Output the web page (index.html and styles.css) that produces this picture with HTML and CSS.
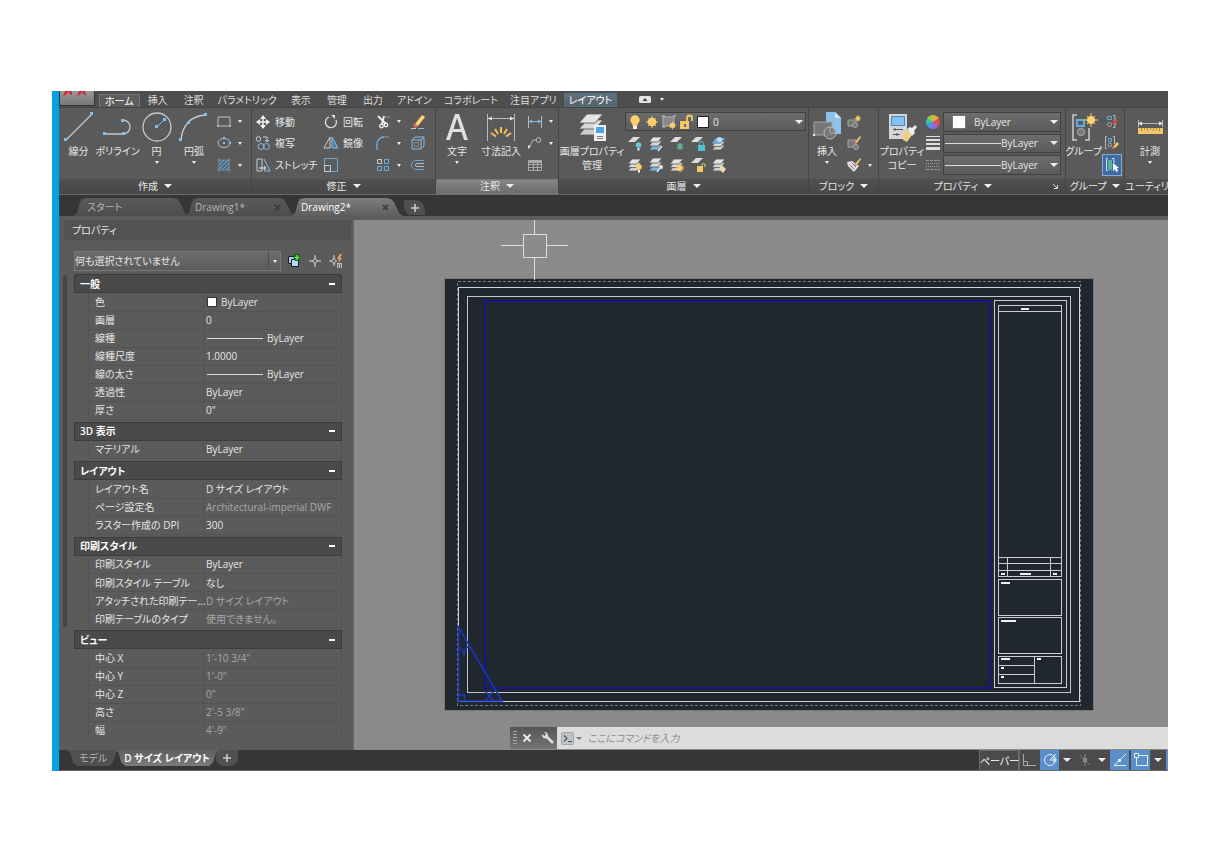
FILE: index.html
```html
<!DOCTYPE html>
<html lang="ja">
<head>
<meta charset="utf-8">
<title>Drawing2</title>
<link rel="stylesheet" href="styles.css">
</head>
<body>
<svg class="defs" aria-hidden="true">
  <defs>
    <symbol id="sheets" viewBox="0 0 16 16">
      <g stroke="#595959" stroke-width="0.800"><path d="M5 9h9l-4 5H1z" fill="#cfcfcf"/><path d="M5 5.500h9l-4 5H1z" fill="#d8d8d8"/><path d="M5 2h9l-4 5H1z" fill="#e4e4e4"/></g>
    </symbol>
    <symbol id="sheets-blue" viewBox="0 0 16 16">
      <g stroke="#595959" stroke-width="0.800"><path d="M5 9h9l-4 5H1z" fill="#7ab5e0"/><path d="M5 5h9l-4 5H1z" fill="#d8d8d8"/><path d="M5 1h9l-4 5H1z" fill="#e4e4e4"/></g>
    </symbol>
    <symbol id="sheet" viewBox="0 0 16 16"><path d="M6 1h7L8 6H1z" fill="#dcdcdc"/></symbol>
    <symbol id="lamp" viewBox="0 0 16 16"><circle cx="8" cy="6" r="4.700" fill="#ffcf68"/><path d="M5.500 10h5v2h-5z" fill="#ffcf68"/><path d="M6 12h4v3H6z" fill="#fff"/></symbol>
    <symbol id="sun" viewBox="0 0 16 16"><circle cx="8" cy="8" r="4.300" fill="#ffcf68"/><path d="M8 2v12M2 8h12M4 4l8 8M12 4l-8 8" stroke="#ffcf68"/></symbol>
    <symbol id="unlock" viewBox="0 0 16 16"><path d="M2 7h9v8H2z" fill="#f3c766"/><path d="M9 8V4a2.500 2.500 0 0 1 5 0v3" fill="none" stroke="#f3c766" stroke-width="1.800"/><path d="M6 10h2v3H6z" fill="#766"/></symbol>
  </defs>
</svg>
<div class="app">
  <nav class="menu" aria-label="リボン タブ">
    <button class="appmenu" aria-label="アプリケーション メニュー"><svg width="34" height="15" viewBox="0 0 34 15"><path d="M3 5l2-5h4l-3 4zM9 0h3v4l-3-1zM17 5l2-5h3l-1 3zM22 0h3l1 5-3-2z" fill="#cf2f32"/></svg></button>
    <button class="mtab on">ホーム</button>
    <button class="mtab">挿入</button>
    <button class="mtab">注釈</button>
    <button class="mtab kana">パラメトリック</button>
    <button class="mtab">表示</button>
    <button class="mtab">管理</button>
    <button class="mtab">出力</button>
    <button class="mtab kana">アドイン</button>
    <button class="mtab kana">コラボレート</button>
    <button class="mtab kana">注目アプリ</button>
    <button class="mtab ctx">レイアウト</button>
    <button class="mtoggle" aria-label="リボンを最小化"><svg width="12" height="7" viewBox="0 0 12 7"><rect width="12" height="7" rx="1.500" fill="#e4e4e4"/><path d="M3.500 5L6 2l2.500 3z" fill="#444"/></svg><i class="caret s"></i></button>
  </nav>

  <div class="ribbon">
    <section class="panel p-draw">
      <div class="pbody">
        <button class="big"><svg width="32" height="32" viewBox="0 0 32 32"><path d="M3 29L29 3" stroke="#c8c8c8" stroke-width="1.300"/><g fill="#83bdea"><rect x="1" y="27" width="3" height="3"/><rect x="27" y="1" width="3" height="3"/></g></svg>線分</button>
        <button class="big"><svg width="32" height="32" viewBox="0 0 32 32"><path d="M3 23h18a7 7 0 0 0 0-14" fill="none" stroke="#c8c8c8" stroke-width="1.300"/><g fill="#83bdea"><rect x="1" y="21" width="3" height="3"/><rect x="20" y="21" width="3" height="3"/><rect x="19" y="8" width="3" height="3"/></g></svg>ポリライン</button>
        <button class="big"><svg width="32" height="32" viewBox="0 0 32 32"><circle cx="16" cy="16" r="14" fill="none" stroke="#c8c8c8" stroke-width="1.300"/><path d="M16 16l7-7" stroke="#83bdea"/><g fill="#83bdea"><rect x="14" y="14" width="3" height="3"/><rect x="22" y="7" width="3" height="3"/></g></svg>円<i class="caret s"></i></button>
        <button class="big"><svg width="32" height="32" viewBox="0 0 32 32"><path d="M3 28Q6 6 27 4" fill="none" stroke="#c8c8c8" stroke-width="1.300"/><g fill="#83bdea"><rect x="1" y="27" width="3" height="3"/><rect x="9" y="10" width="3" height="3"/><rect x="26" y="2" width="3" height="3"/></g></svg>円弧<i class="caret s"></i></button>
        <div class="stack">
          <button class="sm" aria-label="長方形"><svg viewBox="0 0 16 16"><path d="M2 3h12v9H2z" fill="none" stroke="#bcbcbc"/><path d="M1 11h2v2H1zM13 11h2v2h-2z" fill="#83bdea"/></svg><i class="caret s"></i></button>
          <button class="sm" aria-label="楕円"><svg viewBox="0 0 16 16"><ellipse cx="8" cy="8" rx="6" ry="4.500" fill="none" stroke="#bcbcbc"/><path d="M7 7h2v2H7zM13 7h2v2h-2zM7 2h2v2H7z" fill="#83bdea"/></svg><i class="caret s"></i></button>
          <button class="sm" aria-label="ハッチング"><svg viewBox="0 0 16 16"><path d="M3 3h10v10H3z" fill="#4a6d8c"/><path d="M3 8l5-5M3 12l9-9M6 13l7-7M10 13l3-3" stroke="#83bdea" stroke-width="0.700"/><path d="M3 1v14M13 1v14M1 3h14M1 13h14" stroke="#999" stroke-width="0.700"/></svg><i class="caret s"></i></button>
        </div>
      </div>
      <button class="ptitle">作成<i class="caret"></i></button>
    </section>

    <section class="panel p-modify">
      <div class="pbody grid-mod">
        <button class="sm"><svg viewBox="0 0 16 16"><path d="M8 2v12M2 8h12" stroke="#f0f0f0" stroke-width="1.500"/><path d="M8 1l3 4H5zM8 15l3-4H5zM1 8l4-3v6zM15 8l-4-3v6z" fill="#f0f0f0"/></svg>移動</button>
        <button class="sm"><svg viewBox="0 0 16 16"><path d="M6 3a5.500 5.500 0 1 0 7 3" fill="none" stroke="#ddd" stroke-width="1.300"/><path d="M8 1h4v4z" fill="#ddd"/></svg>回転</button>
        <button class="sm" aria-label="トリム"><svg viewBox="0 0 16 16"><path d="M9 3h6" stroke="#999"/><path d="M3 2l8 8M9 2l-2 8" stroke="#f2f2f2" stroke-width="1.800"/><circle cx="6.500" cy="12" r="1.800" fill="none" stroke="#f2f2f2" stroke-width="1.300"/><circle cx="11" cy="11" r="1.800" fill="none" stroke="#f2f2f2" stroke-width="1.300"/></svg><i class="caret s"></i></button>
        <button class="sm" aria-label="削除"><svg viewBox="0 0 16 16"><path d="M12 1l3 2-7 9-3-2z" fill="#ffd27a"/><path d="M5 9l3 3-2 2-3-2z" fill="#eb6a62"/><path d="M1 14.500h5" stroke="#ccc"/><path d="M8 14.500h6" stroke="#83bdea"/></svg></button>
        <button class="sm"><svg viewBox="0 0 16 16"><circle cx="3.500" cy="4" r="2.300" fill="none" stroke="#ccc"/><path d="M8 2h4v4M10 5l2 2 2-2" fill="none" stroke="#ccc"/><circle cx="6" cy="11.500" r="3" fill="none" stroke="#83bdea"/><circle cx="11.500" cy="11.500" r="3" fill="none" stroke="#83bdea"/></svg>複写</button>
        <button class="sm"><svg viewBox="0 0 16 16"><path d="M7 2v11H1z" fill="none" stroke="#ccc"/><path d="M9 2v11h6z" fill="#4d7da3" stroke="#83bdea"/></svg>鏡像</button>
        <button class="sm" aria-label="フィレット"><svg viewBox="0 0 16 16"><path d="M2 15V9a7 7 0 0 1 7-7" fill="none" stroke="#72aee0" stroke-width="1.300"/><path d="M9 2h5" stroke="#999"/></svg><i class="caret s"></i></button>
        <button class="sm" aria-label="分解"><svg viewBox="0 0 16 16"><path d="M2 5h9v9H2zM2 5l3-3h9v9l-3 3M11 5l3-3" fill="none" stroke="#83bdea"/><path d="M4.500 7.500h4v4h-4z" fill="none" stroke="#888"/></svg></button>
        <button class="sm"><svg viewBox="0 0 16 16"><path d="M7 2H2v12h5z" fill="none" stroke="#ccc"/><path d="M9 2l6 12H9" fill="none" stroke="#83bdea"/><path d="M4 11h7M9 9l2 2-2 2" fill="none" stroke="#eee"/></svg>ストレッチ</button>
        <button class="sm" aria-label="尺度変更"><svg viewBox="0 0 16 16"><path d="M1.500 1.500h13v13h-13z" fill="none" stroke="#72a8d5"/><path d="M1.500 8.500h6v6h-6z" fill="none" stroke="#ccc"/></svg></button>
        <button class="sm" aria-label="配列複写"><svg viewBox="0 0 16 16"><path d="M2.500 2.500h4v4h-4z" fill="none" stroke="#ccc"/><path d="M9.500 2.500h4v4h-4zM2.500 9.500h4v4h-4zM9.500 9.500h4v4h-4z" fill="none" stroke="#72a8d5"/></svg><i class="caret s"></i></button>
        <button class="sm" aria-label="オフセット"><svg viewBox="0 0 16 16"><path d="M14 3.500H6a4.500 4.500 0 0 0 0 9h8" fill="none" stroke="#72a8d5"/><path d="M14 6.500H7a1.500 1.500 0 0 0 0 3h7" fill="none" stroke="#bbb"/></svg></button>
      </div>
      <button class="ptitle">修正<i class="caret"></i></button>
    </section>

    <section class="panel p-annot">
      <div class="pbody">
        <button class="big"><svg width="28" height="32" viewBox="0 0 28 32"><path d="M3 29L12 3h4l9 26h-4l-2.500-8h-9L7 29zM10.500 18h7L14 7z" fill="#dfdfdf"/></svg>文字<i class="caret s"></i></button>
        <button class="big"><svg width="32" height="32" viewBox="0 0 32 32"><path d="M2.500 3v27M29.500 3v27M3 7.500h26" stroke="#bbb" fill="none"/><path d="M3 7.500l4-2v4zM29 7.500l-4-2v4z" fill="#eee"/><path d="M16 16v6M10 18l3 5M22 18l-3 5M6 22l5 3.500M26 22l-5 3.500" stroke="#f3c05e" stroke-width="2"/></svg>寸法記入</button>
        <div class="stack">
          <button class="sm" aria-label="長さ寸法"><svg viewBox="0 0 16 16"><path d="M1.500 2v12M14.500 2v12" stroke="#bbb"/><path d="M2 7.500h12" stroke="#83bdea"/><path d="M2 7.500l3-2v4zM14 7.500l-3-2v4z" fill="#83bdea"/></svg><i class="caret s"></i></button>
          <button class="sm" aria-label="引出線"><svg viewBox="0 0 16 16"><circle cx="11.500" cy="5" r="2.300" fill="none" stroke="#bbb"/><path d="M9 5H6l-3 6" fill="none" stroke="#bbb"/><path d="M1 14v-4l3 1.500z" fill="#ddd"/></svg><i class="caret s"></i></button>
          <button class="sm" aria-label="表"><svg viewBox="0 0 16 16"><path d="M1.500 3.500h13v10h-13zM2 7.500h12M2 10.500h12M6.500 6v8M10.500 6v8" fill="none" stroke="#aaa"/><path d="M2 3h12v3H2z" fill="#aaa"/></svg></button>
        </div>
      </div>
      <button class="ptitle lit">注釈<i class="caret"></i></button>
    </section>

    <section class="panel p-layer">
      <div class="pbody">
        <button class="big"><svg width="32" height="32" viewBox="0 0 32 32"><g stroke="#555" stroke-width="0.800"><path d="M11 15h16l-8 9H3z" fill="#cdcdcd"/><path d="M11 9h16l-8 9H3z" fill="#d8d8d8"/><path d="M11 3h16l-8 9H3z" fill="#e4e4e4"/></g><path d="M18 14h12v16H18z" fill="#eef0f2"/><path d="M20 16h8v6h-8z" fill="#4fa3e0"/><path d="M21 25.500h6M21 27.500h6" stroke="#777"/></svg>画層プロパティ<br>管理</button>
        <div class="layers">
          <div class="combo layercombo">
            <svg viewBox="0 0 16 16"><use href="#lamp"/></svg><svg viewBox="0 0 16 16"><use href="#sun"/></svg><svg viewBox="0 0 16 16"><path d="M2 3h11v9H2z" fill="#888" stroke="#b5b5b5"/><path d="M1 2h3M12 2h3M1 13h3" stroke="#ccc"/><circle cx="11.500" cy="11.500" r="2.500" fill="#ffcf68"/><path d="M11.500 7.500v8M7.500 11.500h8M9 9l5 5M14 9l-5 5" stroke="#ffcf68" stroke-width="0.700"/></svg><svg viewBox="0 0 16 16"><use href="#unlock"/></svg><i class="swatch"></i>
            <select aria-label="画層"><option>0</option></select><i class="caret"></i>
          </div>
          <div class="layergrid">
            <button class="sm" aria-label="非表示"><svg viewBox="0 0 16 16"><use href="#sheet"/><circle cx="11.500" cy="9" r="2.800" fill="#62cbd2"/><path d="M10.500 12h2v2.500h-2z" fill="#eee"/></svg></button>
            <button class="sm" aria-label="選択表示"><svg viewBox="0 0 16 16"><use href="#sheets-blue"/><path d="M10 15l4-5" stroke="#eee" stroke-width="1.300"/></svg></button>
            <button class="sm" aria-label="フリーズ"><svg viewBox="0 0 16 16"><use href="#sheet"/><path d="M11 7v7M8 8.500l6 4M14 8.500l-6 4" stroke="#62cbb5" stroke-width="1.300"/></svg></button>
            <button class="sm" aria-label="ロック"><svg viewBox="0 0 16 16"><use href="#sheet"/><path d="M8 9h7v6H8z" fill="#4fc3d0"/><path d="M9.500 9V7.500a2 2 0 0 1 4 0V9" fill="none" stroke="#4fc3d0"/></svg></button>
            <button class="sm" aria-label="現在層に設定"><svg viewBox="0 0 16 16"><use href="#sheets"/><path d="M5 2.500h9l-4 5H1z" fill="#6db0e0"/><circle cx="8.500" cy="3.500" r="2.500" fill="#c5dcee"/></svg></button>
            <button class="sm" aria-label="全画層表示"><svg viewBox="0 0 16 16"><use href="#sheets"/><circle cx="12" cy="10" r="2.800" fill="#ffcf68"/><path d="M11 13h2v2.500h-2z" fill="#fff"/></svg></button>
            <button class="sm" aria-label="選択表示解除"><svg viewBox="0 0 16 16"><use href="#sheets-blue"/><path d="M9 15l5-6M11 9h3v3" fill="none" stroke="#eee" stroke-width="1.300"/></svg></button>
            <button class="sm" aria-label="全画層フリーズ解除"><svg viewBox="0 0 16 16"><use href="#sheets"/><circle cx="11" cy="11" r="2.800" fill="#ffcf68"/><path d="M11 6.500v9M6.500 11h9M8 8l6 6M14 8l-6 6" stroke="#ffcf68" stroke-width="0.800"/></svg></button>
            <button class="sm" aria-label="ロック解除"><svg viewBox="0 0 16 16"><use href="#sheet"/><path d="M7 9h6v6H7z" fill="#f3c766"/><path d="M12 9.500V8a1.500 1.500 0 0 1 3 0v2" fill="none" stroke="#f3c766"/></svg></button>
            <button class="sm" aria-label="画層一致"><svg viewBox="0 0 16 16"><use href="#sheets"/><path d="M10 8l5 4-3 4-4-4z" fill="#efdcae"/></svg></button>
          </div>
        </div>
      </div>
      <button class="ptitle">画層<i class="caret"></i></button>
    </section>

    <section class="panel p-block">
      <div class="pbody">
        <button class="big"><svg width="32" height="32" viewBox="0 0 32 32"><path d="M15 1h9l6 6v16H15z" fill="#8cc3ee"/><path d="M24 1v6h6z" fill="#d0e6f7"/><path d="M3 11h18v13H3z" fill="#777" stroke="#a5a5a5"/><circle cx="19" cy="22" r="6" fill="#777c" stroke="#bbb"/><path d="M19 22h6M19 16v6" stroke="#aaa"/><path d="M2 23h2v2H2z" fill="#eee"/></svg>挿入<i class="caret s"></i></button>
        <div class="stack">
          <button class="sm" aria-label="ブロック作成"><svg viewBox="0 0 16 16"><path d="M2 6h8v6H2z" fill="#777" stroke="#a5a5a5"/><circle cx="9" cy="11" r="2.500" fill="#777" stroke="#aaa"/><circle cx="12" cy="4.500" r="2" fill="#ffd27a"/><path d="M12 1v7M8.500 4.500h7M10 2l4 5M14 2l-4 5" stroke="#f3c766" stroke-width="0.700"/></svg></button>
          <button class="sm" aria-label="ブロック編集"><svg viewBox="0 0 16 16"><path d="M2 5h8v7H2z" fill="#777" stroke="#a5a5a5"/><circle cx="10" cy="12" r="2.500" fill="#777" stroke="#aaa"/><path d="M9 7l5-6 1 1-4 6z" fill="#f3c766"/><path d="M9 6l2 2-3 2z" fill="#e77"/></svg></button>
          <button class="sm" aria-label="属性編集"><svg viewBox="0 0 16 16"><path d="M1 5l5-1 7 5-5 6-6-6z" fill="#ddd"/><path d="M4 8l4 4M6 6l4 4" stroke="#666" stroke-width="0.800"/><path d="M9 7l5-6 1 1-4 6z" fill="#f3c766"/><path d="M9 6l2 2-3 2z" fill="#e77"/></svg><i class="caret s"></i></button>
        </div>
      </div>
      <button class="ptitle">ブロック<i class="caret"></i></button>
    </section>

    <section class="panel p-props">
      <div class="pbody">
        <button class="big"><svg width="32" height="32" viewBox="0 0 32 32"><path d="M3 3h18v25H3z" fill="#d5d5d5"/><path d="M5.500 5.500h13v9h-13z" fill="#83c2f2" stroke="#4a88ba"/><path d="M7 18.500h10M7 23.500h7M9 17v3M11 22v3" stroke="#555"/><path d="M16 23l6-4 4 5-5 7-4-2z" fill="#f2cf86"/><path d="M21 18l3-2 2 1 3-3 2 2-3 4 1 2-3 3z" fill="#eee"/></svg>プロパティ<br>コピー</button>
        <div class="stack marks">
          <svg viewBox="0 0 16 16" aria-hidden="true"><path d="M8 8V1a7 7 0 0 1 6 3.500z" fill="#f6a13c"/><path d="M8 8l6-3.500a7 7 0 0 1 0 7z" fill="#e5504e"/><path d="M8 8l6 3.500A7 7 0 0 1 8 15z" fill="#b45bd1"/><path d="M8 8v7a7 7 0 0 1-6-3.500z" fill="#4c8ff0"/><path d="M8 8l-6 3.500a7 7 0 0 1 0-7z" fill="#38bfae"/><path d="M8 8L2 4.500A7 7 0 0 1 8 1z" fill="#93cf4a"/></svg>
          <svg viewBox="0 0 16 16" aria-hidden="true"><path d="M1 1h14v1H1zM1 4h14v2H1zM1 8h14v2H1zM1 12h14v3H1z" fill="#ddd"/></svg>
          <svg viewBox="0 0 16 16" aria-hidden="true"><path d="M1 3.500h14M1 12.500h14" stroke="#999" stroke-dasharray="3 1"/><path d="M1 6.500h14M1 9.500h14" stroke="#999" stroke-dasharray="1 1"/></svg>
        </div>
        <div class="stack combos">
          <div class="combo"><i class="swatch"></i><select aria-label="オブジェクトの色"><option>ByLayer</option></select><i class="caret"></i></div>
          <div class="combo"><i class="rule"></i><select aria-label="線の太さ"><option>ByLayer</option></select><i class="caret"></i></div>
          <div class="combo"><i class="rule"></i><select aria-label="線種"><option>ByLayer</option></select><i class="caret"></i></div>
        </div>
      </div>
      <div class="ptitle"><button class="plain">プロパティ<i class="caret"></i></button><button class="plain launch" aria-label="プロパティ パレット"><svg width="5" height="5" viewBox="0 0 5 5"><path d="M0 0l4 4M4.500 1v3.500H1" fill="none" stroke="#ddd"/></svg></button></div>
    </section>

    <section class="panel p-group">
      <div class="pbody">
        <button class="big"><svg width="32" height="32" viewBox="0 0 32 32"><path d="M9 4H5v25h4M17 29h4V17" fill="none" stroke="#ccc" stroke-width="1.500"/><path d="M9 9h7v6H9z" fill="none" stroke="#65abe0" stroke-width="2"/><circle cx="13" cy="21" r="3.500" fill="#777" stroke="#999" stroke-width="1.500"/><circle cx="23" cy="9" r="4" fill="#ffd06e"/><path d="M23 2v14M16 9h14M19 5l8 8M27 5l-8 8" stroke="#ffd06e"/></svg>グループ</button>
        <div class="stack">
          <button class="sm" aria-label="グループ解除"><svg viewBox="0 0 16 16"><path d="M3.500 2.500h4v3h-4z" fill="none" stroke="#65abe0"/><circle cx="5.500" cy="10.500" r="2" fill="none" stroke="#aaa"/><path d="M9 1.500h2v12H9" fill="none" stroke="#bbb"/><path d="M9 6l4 4M13 6l-4 4" stroke="#dd4b4b" stroke-width="1.300"/></svg></button>
          <button class="sm" aria-label="グループ編集"><svg viewBox="0 0 16 16"><path d="M3 1.500H1.500v12H3M9 1.500h1.500V9" fill="none" stroke="#bbb"/><path d="M4.500 3.500h3v3h-3z" fill="none" stroke="#65abe0"/><circle cx="6" cy="10" r="1.800" fill="none" stroke="#aaa"/><path d="M9 12l4-5 2 2-4 4z" fill="#f3c766"/><path d="M9 11l2 2-3 1z" fill="#e77"/></svg></button>
          <button class="sm picked" aria-label="グループ選択"><svg viewBox="0 0 16 16"><path d="M4 1.500H2.500v12H4M8 1.500h2V6" fill="none" stroke="#ddd"/><path d="M4 3h4v10H4z" fill="#52b39b"/><path d="M9 6v8l2-2 1 3 2-1-1-3h2z" fill="#fff"/></svg></button>
        </div>
      </div>
      <button class="ptitle">グループ<i class="caret"></i></button>
    </section>

    <section class="panel p-util">
      <div class="pbody">
        <button class="big"><svg width="32" height="32" viewBox="0 0 32 32"><path d="M4.500 9v7M28.500 9v7M4 12.500h24" stroke="#bbb" fill="none"/><path d="M4 12.500l4-2v4zM29 12.500l-4-2v4z" fill="#eee"/><path d="M4 17h25v6H4z" fill="#f3c766"/><path d="M7.500 17v3M10.500 17v2M13.500 17v3M16.500 17v2M19.500 17v3M22.500 17v2M25.500 17v3" stroke="#a5884a"/></svg>計測<i class="caret s"></i></button>
      </div>
      <button class="ptitle">ユーティリ</button>
    </section>
  </div>

  <div class="files">
    <button class="ftab start">スタート</button>
    <div class="ftab"><button class="plain">Drawing1*</button><button class="plain x" aria-label="閉じる"><svg width="7" height="7" viewBox="0 0 7 7"><path d="M1 1l5 5M6 1L1 6" stroke="currentColor" stroke-width="1.600"/></svg></button></div>
    <div class="ftab on"><button class="plain">Drawing2*</button><button class="plain x" aria-label="閉じる"><svg width="7" height="7" viewBox="0 0 7 7"><path d="M1 1l5 5M6 1L1 6" stroke="currentColor" stroke-width="1.600"/></svg></button></div>
    <button class="add" aria-label="新規図面"><svg width="8" height="8" viewBox="0 0 8 8"><path d="M4 0v8M0 4h8" stroke="#ccc" stroke-width="1.600"/></svg></button>
  </div>

  <main class="work">
    <aside class="palette">
      <h2>プロパティ</h2>
      <div class="selector">
        <div class="combo pick"><select aria-label="選択オブジェクト"><option>何も選択されていません</option></select><span class="drop"><i class="caret s"></i></span></div>
        <button class="sm" aria-label="PICKADD"><svg viewBox="0 0 16 16"><path d="M2.500 3.500h7v7h-7z" fill="#a9cdf0" stroke="#15202c"/><path d="M5.500 6.500h7v7h-7z" fill="#b9d8f4" stroke="#15202c"/><circle cx="11" cy="4.500" r="3.500" fill="#185f1c"/><path d="M11 2v5M8.500 4.500h5" stroke="#6be05a" stroke-width="1.500"/></svg></button>
        <button class="sm" aria-label="オブジェクト選択"><svg viewBox="0 0 16 16"><path d="M8 2v4M8 10v4M2 8h4M10 8h4M8 5.500L10.500 8 8 10.500 5.500 8z" fill="none" stroke="#ddd"/></svg></button>
        <button class="sm" aria-label="クイック選択"><svg viewBox="0 0 16 16"><path d="M6 2v4M6 10v3M1 8h3M6 5.500L8.500 8 6 10.500 3.500 8z" fill="none" stroke="#ddd"/><path d="M12 1L9 6h2l-1 4 4-5h-2l2-4z" fill="#f3a84f"/><path d="M9 10h5v5H9z" fill="#bbb"/><path d="M10.500 11v4M12.500 11v4" stroke="#777"/></svg></button>
      </div>
      <div class="scroller">
        <div class="bar"></div>
        <div class="groups">
          <section><button class="ghead">一般<i class="minus"></i></button>
            <table><tr><th>色</th><td><i class="chip"></i>ByLayer</td></tr><tr><th>画層</th><td>0</td></tr><tr><th>線種</th><td><i class="dash"></i>ByLayer</td></tr><tr><th>線種尺度</th><td>1.0000</td></tr><tr><th>線の太さ</th><td><i class="dash"></i>ByLayer</td></tr><tr><th>透過性</th><td>ByLayer</td></tr><tr><th>厚さ</th><td>0"</td></tr></table></section>
          <section><button class="ghead">3D 表示<i class="minus"></i></button>
            <table><tr><th>マテリアル</th><td>ByLayer</td></tr></table></section>
          <section><button class="ghead">レイアウト<i class="minus"></i></button>
            <table><tr><th>レイアウト名</th><td>D サイズ レイアウト</td></tr><tr><th>ページ設定名</th><td class="dim">Architectural-imperial DWF</td></tr><tr><th>ラスター作成の DPI</th><td>300</td></tr></table></section>
          <section><button class="ghead">印刷スタイル<i class="minus"></i></button>
            <table><tr><th>印刷スタイル</th><td>ByLayer</td></tr><tr><th>印刷スタイル テーブル</th><td>なし</td></tr><tr><th>アタッチされた印刷テー...</th><td class="dim">D サイズ レイアウト</td></tr><tr><th>印刷テーブルのタイプ</th><td class="dim">使用できません。</td></tr></table></section>
          <section><button class="ghead">ビュー<i class="minus"></i></button>
            <table><tr><th>中心 X</th><td class="dim">1'-10 3/4"</td></tr><tr><th>中心 Y</th><td class="dim">1'-0"</td></tr><tr><th>中心 Z</th><td class="dim">0"</td></tr><tr><th>高さ</th><td class="dim">2'-5 3/8"</td></tr><tr><th>幅</th><td class="dim">4'-9"</td></tr></table></section>
        </div>
      </div>
    </aside>

    <div class="canvas">
      <svg class="drawing" viewBox="354 220 814 530" preserveAspectRatio="xMinYMin meet" shape-rendering="crispEdges" fill="none">
        <rect x="444" y="278" width="650" height="433" fill="#777"/>
        <rect x="445" y="279" width="648" height="431" fill="#20272f"/>
        <rect x="457.500" y="281.500" width="623" height="424" stroke="#777c82" stroke-dasharray="3 2"/>
        <rect x="458.500" y="287.500" width="621" height="414" stroke="#cfd2d6"/>
        <rect x="467.500" y="296.500" width="603" height="396" stroke="#c3c6ca"/>
        <rect x="485" y="301" width="505" height="387" stroke="#15158a" stroke-width="2"/>
        <g stroke="#c9ccd0">
          <rect x="994.500" y="300.500" width="72" height="387"/>
          <rect x="998.500" y="305.500" width="63" height="271"/>
          <path d="M998 311.500h64M998 557.500h64M998 563.500h64M998 570.500h64M1007.500 557v20M1050.500 557v20"/>
          <rect x="998.500" y="579.500" width="63" height="36"/>
          <rect x="998.500" y="617.500" width="63" height="36"/>
          <rect x="998.500" y="656.500" width="63" height="27"/>
          <path d="M1034.500 656v27M998 665.500h36M998 674.500h36"/>
        </g>
        <g stroke="#f2f2f2" stroke-width="2">
          <path d="M1021 309h8M1001 574h4M1020 574h11M1053 574h4M1001 583h9M1001 621h15M1001 659h9M1037 659h4M1001 668h3M1001 677h3"/>
        </g>
        <g stroke="#1838c4" stroke-width="1.500" shape-rendering="auto">
          <path d="M458.500 627v74H502zM458.500 695h6v6M459 647l5 5v4M464 652l4-6M485 701l9-10M485 691l9 10"/>
        </g>
        <path d="M534.500 220v14M534.500 258v22M501 245.500h22M546 245.500h22M523.500 234.500h23v23h-23z" stroke="#dcdcdc"/>
      </svg>
      <div class="command">
        <div class="cmdgrip"><i class="dots"></i>
          <button class="plain" aria-label="閉じる"><svg width="10" height="10" viewBox="0 0 10 10"><path d="M1.500 1.500l7 7M8.500 1.500l-7 7" stroke="#eee" stroke-width="1.800"/></svg></button>
          <button class="plain" aria-label="カスタマイズ"><svg width="14" height="14" viewBox="0 0 14 14"><path d="M6 6l6 6" stroke="#ddd" stroke-width="2.600"/><path d="M3 1l2 2-1 2-2-1-1-1a3.500 3.500 0 0 0 5 4 3.500 3.500 0 0 0-3-6z" fill="#ddd"/></svg></button>
        </div>
        <div class="cmdline">
          <button class="plain hist" aria-label="最近使用したコマンド"><svg width="13" height="13" viewBox="0 0 13 13"><rect x=".5" y=".5" width="12" height="12" rx="1" fill="#bfc3c8" stroke="#a2a5aa"/><path d="M3 3.500l3 3-3 3M7 9.500h4" fill="none" stroke="#4d545c" stroke-width="1.200"/></svg><i class="caret dark"></i></button>
          <input type="text" aria-label="コマンド" placeholder="ここにコマンドを入力">
        </div>
      </div>
    </div>
  </main>

  <footer class="foot">
    <div class="ltabs">
      <button class="ltab">モデル</button>
      <button class="ltab on">D サイズ レイアウト</button>
      <button class="ltab plus" aria-label="新規レイアウト"><svg width="8" height="8" viewBox="0 0 8 8"><path d="M4 0v8M0 4h8" stroke="#ccc" stroke-width="1.600"/></svg></button>
    </div>
    <div class="status">
      <button class="st paper">ペーパー</button>
      <button class="st sep" aria-label="直交モード"><svg width="16" height="16" viewBox="0 0 16 16"><path d="M2.500 2v11.500H15M2.500 9.500h4v4" fill="none" stroke="#aaa"/></svg></button>
      <button class="st blue" aria-label="極トラッキング"><svg width="16" height="16" viewBox="0 0 16 16"><circle cx="8" cy="8" r="5.500" fill="none" stroke="#e4eef7"/><path d="M8 8h7M8 8l6-6M12 5v6" fill="none" stroke="#e4eef7"/></svg></button>
      <button class="st drop" aria-label="極角度"><i class="caret"></i></button>
      <button class="st" aria-label="アイソメ作図"><svg width="16" height="16" viewBox="0 0 16 16"><path d="M8 2v12" stroke="#63a873"/><path d="M3 3l10 10" stroke="#a66"/><path d="M6.500 6.500h3v3h-3z" fill="none" stroke="#999"/></svg></button>
      <button class="st drop" aria-label="アイソメ面"><i class="caret"></i></button>
      <button class="st blue" aria-label="オブジェクト スナップ トラッキング"><svg width="16" height="16" viewBox="0 0 16 16"><path d="M14 2L2 13.500h12" fill="none" stroke="#e4eef7"/><path d="M6 7h3v3H6z" fill="#e4eef7"/></svg></button>
      <button class="st blue" aria-label="オブジェクト スナップ"><svg width="16" height="16" viewBox="0 0 16 16"><path d="M3.500 3.500h11v10h-11z" fill="none" stroke="#e4eef7"/><path d="M1.500 1.500h4v4h-4z" fill="#5b8fca" stroke="#e4eef7"/></svg></button>
      <button class="st drop" aria-label="スナップ設定"><i class="caret"></i></button>
      <span class="edge"></span>
    </div>
  </footer>
</div>
</body>
</html>
```
FILE: styles.css
```css
* { box-sizing: border-box; }
body {
  margin: 0;
  height: 100vh;
  padding: 91px 52px;
  background: #fff;
  color: #e6e6e6;
  font: 10px/14px "Open Sans", "Noto Sans CJK JP", sans-serif;
  font-feature-settings: "palt";
}
.defs { position: absolute; width: 0; height: 0; }
button, select, input {
  font: inherit;
  font-feature-settings: inherit;
  color: inherit;
  background: none;
  border: 0;
  padding: 0;
  margin: 0;
}
button { white-space: nowrap; }
svg { display: block; flex: none; }
.app {
  height: 100%;
  display: flex;
  flex-direction: column;
  overflow: hidden;
  border-left: 7px solid #07a0e6;
  background: #5a5a5a;
}
.caret {
  flex: none;
  width: 0;
  border: 4px solid transparent;
  border-top: 4px solid #eee;
  border-bottom: 0;
}
.caret.s { border-width: 3px 2px 0; }
.caret.dark { border-width: 3px 3px 0; border-top-color: #777; }

/* ribbon tabs */
.menu {
  flex: none;
  display: flex;
  height: 17px;
  background: #4e4e4e;
  border-bottom: 1px solid #444;
}
.appmenu {
  width: 36px;
  height: 15px;
  margin-right: 4px;
  border: 1px solid #333;
  border-top: 0;
  background: linear-gradient(#999, #777);
  overflow: hidden;
}
.mtab { padding: 2px 8px 0; color: #dedede; }
.mtab.kana { padding: 2px 6px 0; }
.mtab.on {
  margin-top: 3px;
  padding: 0 5px;
  background: #5d5d5d;
  border: 1px solid #757575;
  border-bottom: 0;
  color: #fff;
  line-height: 12px;
}
.mtab.ctx {
  margin: 2px 0 0 1px;
  padding: 0 4px;
  background: linear-gradient(#62727c, #55626b);
  border: 1px solid #4e7386;
  color: #fff;
  line-height: 12px;
}
.mtoggle { display: flex; align-items: center; gap: 9px; margin-left: 22px; }

/* ribbon panels */
.ribbon {
  flex: none;
  display: flex;
  height: 87px;
  border-bottom: 1px solid #6a6a6a;
  overflow: hidden;
}
.panel {
  flex: none;
  display: flex;
  flex-direction: column;
  border-right: 1px solid #454545;
  overflow: hidden;
}
.pbody { flex: 1; min-height: 0; display: flex; padding-top: 3px; }
.ptitle {
  flex: none;
  display: flex;
  align-items: center;
  justify-content: center;
  gap: 6px;
  height: 15px;
  padding-bottom: 1px;
  background: linear-gradient(#505050, #474747);
}
.ptitle.lit { background: linear-gradient(#858585, #6c6c6c); border: 1px solid #777; }
.plain { display: flex; align-items: center; gap: 6px; }
.big {
  flex: none;
  display: flex;
  flex-direction: column;
  align-items: center;
  text-align: center;
}
.big svg { margin-bottom: 1px; }
.big .caret { margin-top: 3px; }
.stack { display: grid; grid-template-rows: repeat(3, 1fr); padding-bottom: 3px; }
.sm { display: flex; align-items: center; gap: 4px; }
.sm svg, .combo svg, .marks svg { width: 16px; height: 16px; }
.sm .caret { margin-left: 2px; }

.p-draw { width: 193px; }
.p-draw .big { width: 39px; }
.p-draw .big:nth-child(4) { width: 36px; }
.p-draw .stack { margin-left: 4px; }
.p-modify { width: 184px; }
.grid-mod {
  display: grid;
  grid-template-columns: 68px 52px 35px 20px;
  grid-template-rows: repeat(3, 1fr);
  padding: 3px 0 3px 3px;
}
.p-annot { width: 123px; }
.p-annot .big { width: 42px; }
.p-annot .big + .big { width: 46px; }
.p-annot .stack { margin-left: 3px; }
.p-layer { width: 250px; }
.p-layer .big { width: 66px; }
.layers { flex: 1; display: flex; flex-direction: column; padding: 1px 2px 3px 0; }
.layercombo { height: 19px; gap: 1px; padding-left: 1px; }
.layercombo .swatch { margin: 0 3px 0 2px; }
.layergrid {
  flex: 1;
  display: grid;
  grid-template-columns: repeat(5, 21px);
  grid-template-rows: repeat(2, 1fr);
  padding: 2px 0 0 2px;
}
.p-block { width: 70px; }
.p-block .big { width: 36px; }
.p-block .stack { margin-left: 1px; }
.p-props { width: 187px; }
.p-props .big { width: 46px; }
.marks { width: 18px; align-items: center; }
.combos { flex: 1; gap: 2px; padding: 1px 4px 4px 0; }
.p-props .ptitle { display: grid; grid-template-columns: 1fr auto; padding-right: 7px; }
.p-props .ptitle .plain { justify-content: center; }
.p-group { width: 59px; }
.p-group .big { width: 35px; }
.p-group .stack { width: 20px; margin-left: 1px; }
.p-group .sm { justify-content: center; }
.picked { background: #3f6da3; border: 1px solid #86abd6; }
.p-util { flex: 1; border-right: 0; }
.p-util .big { width: 50px; }
.p-util .ptitle { justify-content: flex-start; }

.combo {
  display: flex;
  align-items: center;
  min-width: 0;
  padding-right: 2px;
  border: 1px solid #404040;
  background: linear-gradient(#6d6d6d, #5b5b5b);
}
.combo select { flex: 1; min-width: 0; appearance: none; outline: 0; }
.swatch { flex: none; width: 12px; height: 12px; background: #fff; border: 1px solid #222; }
.combos .swatch { width: 14px; height: 14px; margin: 0 8px; border-color: #777; }
.rule { width: 56px; height: 1px; margin-left: 1px; background: #ddd; }

/* file tabs */
.files {
  flex: none;
  display: flex;
  align-items: flex-end;
  height: 25px;
  padding-left: 14px;
  background: #363636;
  border-bottom: 4px solid #5c5c5c;
}
.ftab {
  display: flex;
  align-items: center;
  justify-content: space-between;
  width: 110px;
  height: 18px;
  margin-right: -4px;
  padding: 0 14px 0 10px;
  background: linear-gradient(#595959, #4d4d4d);
  color: #b5b5b5;
  clip-path: polygon(0 100%, 4px 84%, 7px 24%, 9px 6%, 14px 0, calc(100% - 17px) 0, calc(100% - 12px) 6%, calc(100% - 9px) 24%, calc(100% - 4px) 84%, 100% 100%);
}
.ftab.start { width: 116px; padding-left: 14px; }
.ftab.on { width: 112px; background: linear-gradient(#7d7d7d, #5e5e5e); color: #fff; }
.x { color: #383838; }
.add {
  display: grid;
  place-items: center;
  width: 21px;
  height: 15px;
  margin: 0 0 1px 5px;
  border-radius: 2px 10px 2px 8px;
  background: #505050;
}

/* work area */
.work { flex: 1; min-height: 0; display: flex; }
.palette {
  flex: none;
  width: 295px;
  display: flex;
  flex-direction: column;
  padding-bottom: 14px;
  background: #5b5b5b;
  border-right: 1px solid #666;
}
.palette h2 {
  margin: 0 2px 0 5px;
  padding: 3px 8px;
  background: #525252;
  font-size: 10px;
  font-weight: 400;
}
.selector { display: flex; align-items: center; gap: 5px; margin: 11px 0 3px 15px; }
.selector .combo { width: 207px; height: 20px; padding: 0; border-color: #777; }
.drop { display: grid; place-items: center; align-self: stretch; width: 12px; border-left: 1px solid #4e4e4e; }
.scroller { flex: 1; min-height: 0; display: flex; overflow: hidden; }
.bar { width: 4px; height: 352px; margin: 1px 7px 0 4px; border-radius: 2px; background: #464646; }
.groups { width: 268px; }
.groups section { margin-bottom: 2px; }
.ghead {
  display: flex;
  align-items: center;
  justify-content: space-between;
  width: 100%;
  height: 19px;
  padding: 0 6px 0 5px;
  background: #4a4a4a;
  border: 1px solid #3c3c3c;
  color: #fff;
  font-weight: 600;
}
.minus { width: 6px; height: 2px; background: #fff; }
table { width: calc(100% - 14px); margin-left: 14px; border-collapse: collapse; table-layout: fixed; }
tr { height: 18px; }
th, td {
  padding: 0 0 0 2px;
  border: 1px solid #545454;
  border-top: 0;
  font-weight: 400;
  text-align: left;
  white-space: nowrap;
  line-height: 14px;
}
th { width: 115px; padding-left: 6px; }
.dim { color: #a8a8a8; }
.chip { display: inline-block; width: 10px; height: 10px; margin: 0 4px 0 1px; background: #fff; border: 1px solid #333; vertical-align: -1px; }
.dash { display: inline-block; width: 56px; height: 1px; margin: 0 4px 0 1px; background: #ddd; vertical-align: 3px; }

.canvas { position: relative; flex: 1; min-width: 0; background: #8a8a8a; overflow: hidden; }
.drawing { width: 100%; }
.command { position: absolute; left: 156px; right: 0; bottom: 1px; display: flex; height: 22px; }
.cmdgrip {
  display: flex;
  align-items: center;
  gap: 9px;
  width: 47px;
  padding-left: 3px;
  background: linear-gradient(#555, #757575);
}
.dots { width: 4px; height: 15px; margin-right: -4px; background: repeating-linear-gradient(#aaa 0 1px, transparent 1px 3px); }
.cmdline { flex: 1; display: flex; align-items: center; padding-left: 4px; background: #dcdcdc; }
.hist { gap: 2px; }
.cmdline input { flex: 1; margin-left: 6px; outline: 0; color: #333; font-style: italic; }
.cmdline input::placeholder { color: #8d8d8d; opacity: 1; }

/* footer */
.foot {
  flex: none;
  display: flex;
  justify-content: space-between;
  height: 21px;
  background: #363636;
  border-bottom: 1px solid #666;
}
.ltabs { display: flex; padding-left: 8px; }
.ltab {
  height: 16px;
  margin-right: -4px;
  padding: 0 12px;
  background: #505050;
  color: #b5b5b5;
  clip-path: polygon(0 0, 3px 16%, 6px 76%, 10px 100%, calc(100% - 10px) 100%, calc(100% - 6px) 76%, calc(100% - 3px) 16%, 100% 0);
}
.ltab.on { padding: 0 9px; background: linear-gradient(#5e5e5e, #7b7b7b); color: #fff; font-weight: 600; }
.ltab.plus { width: 22px; padding: 0 7px; margin-left: 1px; border-radius: 0 0 8px 8px; clip-path: none; }
.status { display: flex; background: #4b4b4b; }
.st { display: grid; place-items: center; width: 19px; margin-right: 2px; }
.st.paper { width: 40px; margin-right: 0; border: 1px solid #6b6b6b; border-bottom: 0; color: #fff; }
.st.blue { background: #5b8fca; }
.st.sep { border-left: 1px solid #6b6b6b; }
.st.drop { width: 12px; border: 0; }
.edge { width: 2px; background: #5b8fca; }
```
